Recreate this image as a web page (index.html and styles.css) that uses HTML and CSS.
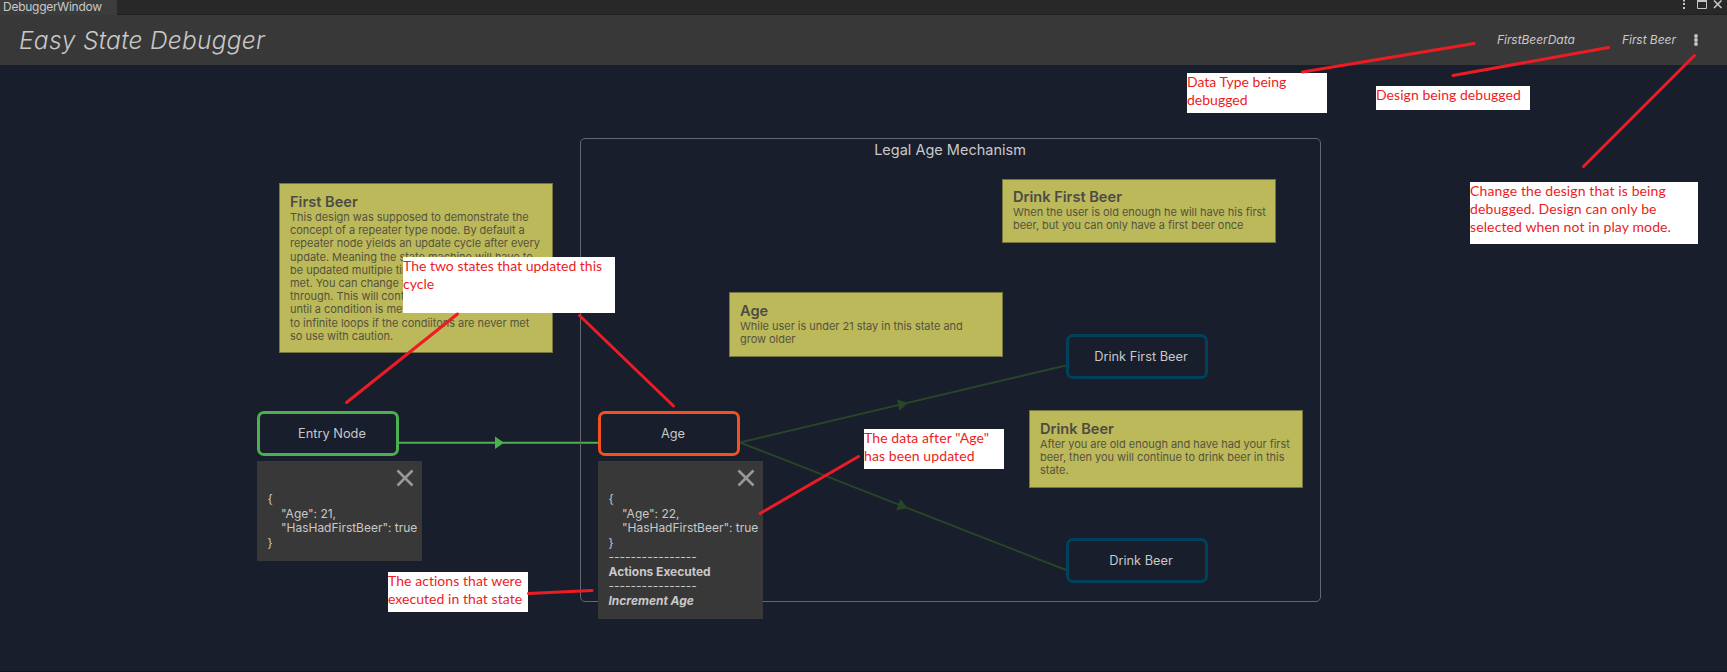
FILE: index.html
```html
<!DOCTYPE html>
<html lang="en">
<head>
<meta charset="utf-8">
<title>DebuggerWindow</title>
<link rel="stylesheet" href="styles.css">
</head>
<body>
<div class="window">
  <div class="tabbar">
    <div class="tab"><span>DebuggerWindow</span></div>
    <svg class="window-controls" width="46" height="14" viewBox="0 0 46 14">
      <path d="M5 0h2v1.500h-2zM5 3h2v2h-2zM5 7h2v2h-2z" fill="#c4c4c4"/>
      <path d="M19.500 0.500h9v8h-9z" fill="none" stroke="#c4c4c4"/>
      <path d="M19 0h10v2h-10z" fill="#c4c4c4"/>
      <path d="M36 0.500l7.500 7.500M43.500 0.500l-7.500 7.500" stroke="#c4c4c4" stroke-width="1.600"/>
    </svg>
  </div>
  <header class="header">
    <h1 class="title">Easy State Debugger</h1>
    <span class="data-type">FirstBeerData</span>
    <span class="design">First Beer</span>
    <svg class="menu" width="4" height="12" viewBox="0 0 4 12" fill="#c8c8c8"><circle cx="2" cy="2" r="1.900"/><circle cx="2" cy="6" r="1.900"/><circle cx="2" cy="10" r="1.900"/></svg>
  </header>
  <main class="canvas"></main>

  <svg class="layer" width="1727" height="672" viewBox="0 0 1727 672">
    <path d="M399 442.800H598" stroke="#4caf50" stroke-width="2"/>
    <path d="M495 436.500l9 6.300-9 6.300z" fill="#4caf50"/>
    <g stroke="#274627" stroke-width="1.900"><path d="M740 442.500L1066 365.500"/><path d="M740 442.500L1066 570"/></g>
    <g fill="#274627"><path d="M-5-6L5 0-5 6z" transform="translate(903 404) rotate(-13)"/><path d="M-5-6L5 0-5 6z" transform="translate(903 506.500) rotate(21)"/></g>
  </svg>

  <section class="group"><h2>Legal Age Mechanism</h2></section>

  <article class="note note-first"><h3>First Beer</h3><p>This design was supposed to demonstrate the<br>concept of a repeater type node. By default a<br>repeater node yields an update cycle after every<br>update. Meaning the state machine will have to<br>be updated multiple times until a condition is<br>met. You can change this to loop all the way<br>through. This will continue to update the state<br>until a condition is met. This can of course lead<br>to infinite loops if the condiitons are never met<br>so use with caution.</p></article>
  <article class="note note-drink-first"><h3>Drink First Beer</h3><p>When the user is old enough he will have his first<br>beer, but you can only have a first beer once</p></article>
  <article class="note note-age"><h3>Age</h3><p>While user is under 21 stay in this state and<br>grow older</p></article>
  <article class="note note-drink"><h3>Drink Beer</h3><p>After you are old enough and have had your first<br>beer, then you will continue to drink beer in this<br>state.</p></article>

  <div class="node node-entry">Entry Node</div>
  <div class="node node-age">Age</div>
  <div class="node node-drink-first">Drink First Beer</div>
  <div class="node node-drink">Drink Beer</div>

  <div class="panel panel-entry">
    <svg class="close" width="18" height="18" viewBox="0 0 18 18"><path d="M1.500 1.500l15 15M16.500 1.500l-15 15" stroke="#989898" stroke-width="2.600"/></svg>
    <div>{</div><div class="prop">"Age": 21,</div><div class="prop">"HasHadFirstBeer": true</div><div>}</div>
  </div>
  <div class="panel panel-age">
    <svg class="close" width="18" height="18" viewBox="0 0 18 18"><path d="M1.500 1.500l15 15M16.500 1.500l-15 15" stroke="#989898" stroke-width="2.600"/></svg>
    <div>{</div><div class="prop">"Age": 22,</div><div class="prop">"HasHadFirstBeer": true</div><div>}</div>
    <div class="rule">----------------</div><div class="strong">Actions Executed</div><div class="rule">----------------</div><div class="strong action">Increment Age</div>
  </div>

  <div class="callout callout-type">Data Type being<br>debugged</div>
  <div class="callout callout-design">Design being debugged</div>
  <div class="callout callout-change">Change the design that is being<br>debugged. Design can only be<br>selected when not in play mode.</div>
  <div class="callout callout-states">The two states that updated this<br>cycle</div>
  <div class="callout callout-data">The data after "Age"<br>has been updated</div>
  <div class="callout callout-actions">The actions that were<br>executed in that state</div>

  <svg class="layer" width="1727" height="672" viewBox="0 0 1727 672">
    <g stroke="#ed1c24" stroke-width="3" stroke-linecap="round">
      <path d="M1302.500 72L1474 43.500"/><path d="M1453 75.500L1608.500 47.500"/><path d="M1583.500 166.500L1694.500 55.500"/>
      <path d="M457.500 314L346.500 402.500"/><path d="M579.500 315.500L673.500 406"/><path d="M760 513.500L858.500 456.500"/><path d="M528.500 593.500L592 590.500"/>
    </g>
  </svg>
</div>
</body>
</html>
```

FILE: styles.css
```css
* { box-sizing: border-box; }
body { margin: 0; background: #181e2c; font-family: Inter, "Liberation Sans", sans-serif; }
h1, h2, h3, p { margin: 0; }
.window { position: relative; display: flex; flex-direction: column; width: 1727px; height: 672px; overflow: hidden; color: #c8c8c8; }
.tabbar { display: flex; justify-content: space-between; height: 15px; background: #282828; border-bottom: 1px solid #202020; }
.tab { width: 117px; height: 15px; padding-left: 3px; background: #3c3c3c; font-size: 12px; line-height: 14px; letter-spacing: -0.25px; white-space: nowrap; }
.window-controls { margin-right: 3px; margin-left: auto; }
.header { display: flex; align-items: center; height: 50px; padding: 0 29px 0 19px; background: #383838; font-style: italic; }
.title { flex: 1; font-size: 24.5px; font-weight: 350; line-height: 50px; letter-spacing: 0.28px; }
.data-type, .design { padding-bottom: 1px; font-size: 12px; letter-spacing: -0.05px; }
.data-type { width: 125px; }
.design { width: 72px; }
.canvas { flex: 1; background: #181e2c; border-bottom: 1px solid #10141e; }
.layer { position: absolute; inset: 0; fill: none; }

.group { position: absolute; left: 580px; top: 138px; width: 741px; height: 464px; border: 1px solid #65696e; border-radius: 5px; text-align: center; }
.group h2 { padding-top: 1px; padding-right: 1px; font-size: 14.5px; font-weight: 400; line-height: 20px; }

.note { position: absolute; width: 274px; padding: 9px 0 0 10px; border: 1px solid #76753f; background: #bcb95a; color: #55533f; white-space: nowrap; }
.note h3 { font-size: 14.6px; font-weight: 600; line-height: 18px; color: #4d4b45; }
.note p { font-size: 11px; line-height: 13.2px; letter-spacing: -0.03px; }
.note-first { left: 279px; top: 183px; height: 170px; }
.note-drink-first { left: 1002px; top: 179px; height: 64px; padding-top: 8px; }
.note-age { left: 729px; top: 292px; height: 65px; }
.note-drink { left: 1029px; top: 410px; height: 78px; }

.node { position: absolute; width: 142px; height: 45px; padding-left: 8px; border: 3px solid; border-radius: 7px; background: #181e2c; color: #c8c8c8; font-size: 12.8px; line-height: 39px; text-align: center; }
.node-entry { left: 257px; top: 411px; border-color: #4caf50; }
.node-age { left: 598px; top: 411px; border-color: #f4511e; }
.node-drink-first { left: 1066px; top: 334px; border-color: #00415c; }
.node-drink { left: 1066px; top: 538px; border-color: #00415c; }

.panel { position: absolute; top: 461px; width: 165px; padding: 31px 0 0 10.5px; background: #383838; font-size: 12px; line-height: 14.55px; letter-spacing: -0.02px; white-space: nowrap; }
.panel > div { height: 14.55px; }
.panel-entry { left: 257px; height: 100px; }
.panel-age { left: 598px; height: 158px; }
.prop { padding-left: 13.5px; }
.close { position: absolute; top: 8px; right: 8px; }
.rule { letter-spacing: 0; }
.strong { font-weight: 700; }
.action { font-style: italic; }

.callout { position: absolute; background: #fff; color: #ed1c24; font-family: Lato, "Noto Sans", sans-serif; font-size: 14px; line-height: 18px; white-space: nowrap; }
.callout-type { left: 1187px; top: 73px; width: 140px; height: 40px; }
.callout-design { left: 1376px; top: 86px; width: 154px; height: 24px; letter-spacing: 0.05px; }
.callout-change { left: 1470px; top: 182px; width: 228px; height: 62px; letter-spacing: 0.12px; }
.callout-states { left: 403px; top: 257px; width: 212px; height: 56px; }
.callout-data { left: 864px; top: 429px; width: 140px; height: 40px; letter-spacing: 0.1px; }
.callout-actions { left: 388px; top: 572px; width: 140px; height: 40px; letter-spacing: 0.05px; }
```
